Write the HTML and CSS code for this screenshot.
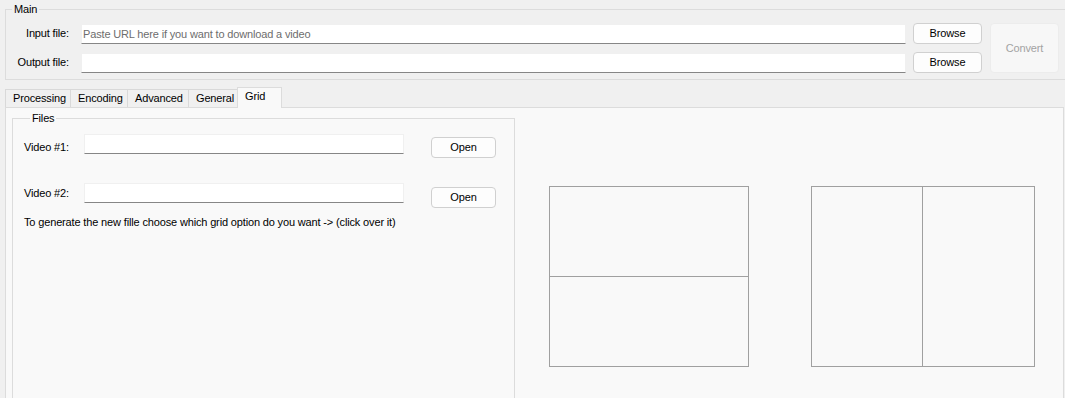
FILE: index.html
```html
<!DOCTYPE html>
<html lang="en">
<head>
    <meta charset="UTF-8">
    <meta name="viewport" content="width=device-width, initial-scale=1.0">
    <title>Video Converter</title>
    <link rel="stylesheet" href="styles.css">
</head>
<body>
    <fieldset class="group main-group">
        <legend>Main</legend>
        <div class="main-body">
            <div class="file-rows">
                <div class="file-row">
                    <label class="file-label" for="input-file">Input file:</label>
                    <input class="textbox file-box" id="input-file" type="text" placeholder="Paste URL here if you want to download a video">
                    <button class="btn browse">Browse</button>
                </div>
                <div class="file-row">
                    <label class="file-label" for="output-file">Output file:</label>
                    <input class="textbox file-box" id="output-file" type="text">
                    <button class="btn browse">Browse</button>
                </div>
            </div>
            <button class="btn convert" disabled>Convert</button>
        </div>
    </fieldset>

    <div class="tab-strip">
        <div class="tab tab-processing">Processing</div>
        <div class="tab tab-encoding">Encoding</div>
        <div class="tab tab-advanced">Advanced</div>
        <div class="tab tab-general">General</div>
        <div class="tab tab-grid active">Grid</div>
    </div>
    <div class="tab-page">
        <fieldset class="group files-group">
            <legend>Files</legend>
            <div class="video-row first">
                <label class="video-label">Video #1:</label>
                <input class="textbox video-box" type="text">
                <button class="btn open">Open</button>
            </div>
            <div class="video-row second">
                <label class="video-label">Video #2:</label>
                <input class="textbox video-box" type="text">
                <button class="btn open">Open</button>
            </div>
            <p class="hint">To generate the new fille choose which grid option do you want -&gt; (click over it)</p>
        </fieldset>

        <div class="grid-options">
            <div class="grid-option horizontal" title="Stacked">
                <div class="cell"></div>
                <div class="cell"></div>
            </div>
            <div class="grid-option vertical" title="Side by side">
                <div class="cell"></div>
                <div class="cell"></div>
            </div>
        </div>
    </div>
</body>
</html>
```

FILE: styles.css
```css
body {
    margin: 0;
    background: #f0f0f0;
    font-family: "Liberation Sans", Arial, sans-serif;
    font-size: 11px;
    letter-spacing: -0.15px;
    line-height: 15px;
    color: #000;
    overflow: hidden;
}
.group {
    border: 1px solid #dcdcdc;
    padding: 0;
    min-width: 0;
}
.group legend {
    margin-left: 6px;
    padding: 0 2px;
    line-height: 15px;
}
.main-group {
    margin: 2px -10px 0 5px;
    padding: 6px 0 6px 0;
}
.main-body {
    display: flex;
    gap: 8px;
}
.file-rows {
    display: flex;
    flex-direction: column;
    gap: 8px;
}
.file-row {
    display: flex;
    align-items: center;
    height: 21px;
}
.file-label {
    width: 63px;
    text-align: right;
    margin-right: 12px;
}
.textbox {
    box-sizing: border-box;
    height: 20px;
    background: #fff;
    border: 1px solid #f0f0f0;
    border-bottom-color: #868686;
    padding: 0 1px;
    font: inherit;
    letter-spacing: inherit;
    color: #000;
    outline: none;
}
.textbox::placeholder {
    color: #6d6d6d;
}
.file-box {
    width: 825px;
    margin-right: 7px;
}
.btn {
    box-sizing: border-box;
    font: inherit;
    letter-spacing: inherit;
    color: #000;
    background: #fdfdfd;
    border: 1px solid #d0d0d0;
    border-radius: 4px;
    padding: 0;
}
.browse {
    width: 69px;
    height: 21px;
}
.convert {
    width: 69px;
    height: 50px;
    background: #f7f7f7;
    border-color: #ececec;
    color: #a3a3a3;
}

/* tabs */
.tab-strip {
    display: flex;
    align-items: flex-start;
    height: 21px;
    margin: 7px 0 -1px 5px;
    position: relative;
    z-index: 1;
}
.tab {
    box-sizing: border-box;
    height: 18px;
    margin-top: 2px;
    margin-left: -1px;
    padding: 1px 0 0 7px;
    border: 1px solid #d9d9d9;
    border-bottom: none;
    background: #f0f0f0;
}
.tab:first-child {
    margin-left: 0;
}
.tab-processing { width: 66px; }
.tab-encoding { width: 58px; }
.tab-advanced { width: 62px; }
.tab-general { width: 50px; }
.tab-grid { width: 45px; }
.tab.active {
    height: 21px;
    margin-top: 0;
    padding-top: 1px;
    background: #f9f9f9;
    border-color: #dcdcdc;
}
.tab-page {
    display: flex;
    align-items: flex-start;
    height: 300px;
    margin: 0 1px 0 5px;
    background: #f9f9f9;
    border: 1px solid #dcdcdc;
}

/* files group */
.files-group {
    width: 503px;
    height: 300px;
    box-sizing: border-box;
    margin: 3px 0 0 6px;
    padding: 8px 0 0 11px;
}
.video-row {
    display: flex;
    align-items: flex-start;
}
.video-row.second {
    margin-top: 25px;
}
.video-label {
    width: 60px;
}
.first .video-label {
    margin-top: 6px;
}
.second .video-label {
    margin-top: 3px;
}
.video-box {
    width: 320px;
    margin-right: 27px;
}
.open {
    width: 65px;
    height: 21px;
}
.first .open {
    margin-top: 3px;
}
.second .open {
    margin-top: 4px;
}
.hint {
    margin: 7px 0 0;
}

/* grid previews */
.grid-options {
    display: flex;
    gap: 62px;
    margin: 78px 0 0 34px;
}
.grid-option {
    display: flex;
    box-sizing: border-box;
    height: 181px;
    border: 1px solid #a0a0a0;
    cursor: pointer;
}
.grid-option .cell {
    flex: 1;
}
.horizontal {
    width: 200px;
    flex-direction: column;
}
.horizontal .cell + .cell {
    border-top: 1px solid #a0a0a0;
}
.vertical {
    width: 224px;
}
.vertical .cell:first-child {
    flex: 0 0 110px;
    border-right: 1px solid #a0a0a0;
}
```
